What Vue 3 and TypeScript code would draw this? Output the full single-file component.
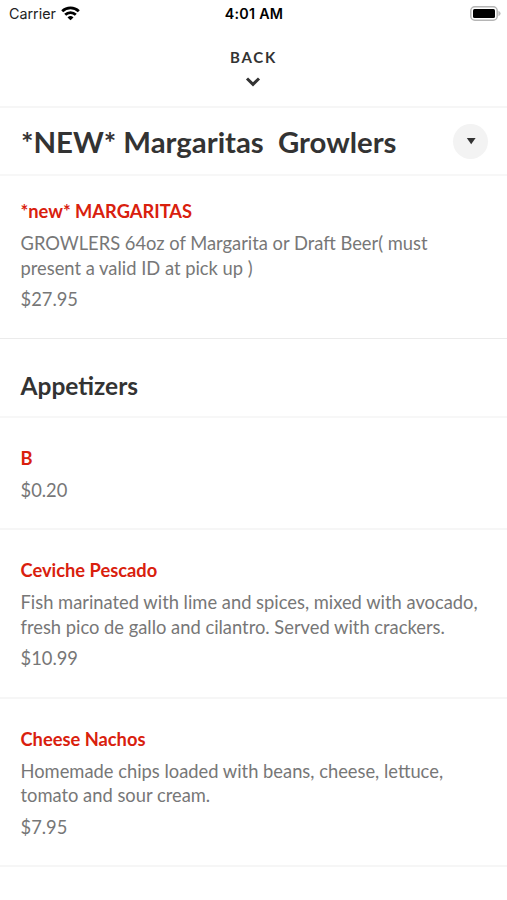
<script setup lang="ts">
interface Item { name: string; lines: string[]; price: string }
const special: Item = {
  name: '*new* MARGARITAS',
  lines: ['GROWLERS 64oz of Margarita or Draft Beer( must', 'present a valid ID at pick up )'],
  price: '$27.95',
}
const appetizers: Item[] = [
  { name: 'B', lines: [], price: '$0.20' },
  { name: 'Ceviche Pescado', lines: ['Fish marinated with lime and spices, mixed with avocado,', 'fresh pico de gallo and cilantro. Served with crackers.'], price: '$10.99' },
  { name: 'Cheese Nachos', lines: ['Homemade chips loaded with beans, cheese, lettuce,', 'tomato and sour cream.'], price: '$7.95' },
]
</script>

<template>
  <main class="screen">
    <header class="status">
      <div class="carrier">
        <span>Carrier</span>
        <svg width="19" height="15" viewBox="0 0 19 15" fill="none" stroke="#000" stroke-width="2.8">
          <path d="M1.2 5.2a12 12 0 0 1 16.6 0M4.2 8.8a7.6 7.6 0 0 1 10.6 0" />
          <path d="M9.5 14.2 6.5 11.4a4.3 4.3 0 0 1 6 0z" fill="#000" stroke="none" />
        </svg>
      </div>
      <time>4:01 AM</time>
      <svg class="battery" width="31" height="15" viewBox="0 0 31 15">
        <rect x=".8" y=".8" width="26.4" height="13.4" rx="4" fill="none" stroke="#b5b5b5" stroke-width="1.5" />
        <rect x="3" y="3" width="22" height="9" rx="1.5" />
        <path d="M28.4 4.7q2.2 1 2.2 2.8t-2.2 2.8z" fill="#bbb" />
      </svg>
    </header>
    <button class="back">
      <span>BACK</span>
      <svg width="16" height="10" viewBox="0 0 16 10"><path d="m2 1.5 6 5.8 6-5.8" fill="none" stroke="#333" stroke-width="3" /></svg>
    </button>
    <section class="title">
      <h1>*NEW* Margaritas&nbsp; Growlers</h1>
      <button class="toggle" aria-label="Categories">
        <svg width="10" height="8" viewBox="0 0 10 8"><path d="M.8.9h8.8L5.2 7.2z" fill="#333" /></svg>
      </button>
    </section>
    <article class="item first">
      <h3>{{ special.name }}</h3>
      <p class="desc"><span v-for="line in special.lines" :key="line">{{ line }}</span></p>
      <p class="price">{{ special.price }}</p>
    </article>
    <h2>Appetizers</h2>
    <article v-for="item in appetizers" :key="item.name" class="item">
      <h3>{{ item.name }}</h3>
      <p v-if="item.lines.length" class="desc"><span v-for="line in item.lines" :key="line">{{ line }}</span></p>
      <p class="price">{{ item.price }}</p>
    </article>
  </main>
</template>

<style>
body { margin: 0; background: #fff; }
</style>
<style scoped>
* { box-sizing: border-box; }
.screen { width: 507px; height: 900px; overflow: hidden; background: #fff; color: #333; font-family: Lato, sans-serif; }
h1, h2, h3, p { margin: 0; }
button { border: 0; padding: 0; background: none; font: inherit; color: inherit; }
svg { display: block; }
.status { display: grid; grid-template-columns: 1fr auto 1fr; height: 28px; padding: 0 6px 0 9px; align-items: center; font: 14.3px/28px Inter, sans-serif; color: #000; }
.carrier { display: flex; align-items: center; gap: 5px; }
.carrier svg { margin-top: -2px; }
.carrier span { color: #222; }
.status time { font-weight: 600; letter-spacing: .25px; margin-left: -2px; }
.battery { justify-self: end; margin-top: -2px; }
.back { display: flex; flex-direction: column; align-items: center; width: 100%; height: 80px; padding-top: 19px; border-bottom: 2px solid #f6f6f6; font-size: 15px; line-height: 20px; font-weight: 700; letter-spacing: 1.7px; }
.back svg { margin: 10px 1px 0 0; }
.title { display: flex; align-items: center; justify-content: space-between; height: 68px; padding: 0 19px 0 21px; border-bottom: 2px solid #f7f7f7; }
h1 { font-size: 29.35px; line-height: 36px; font-weight: 700; padding-top: 2px; letter-spacing: -.01px; font-variant-ligatures: common-ligatures; }
.toggle { display: grid; place-items: center; width: 35px; height: 35px; border-radius: 50%; background: #f3f3f3; }
h2 { height: 79px; padding: 31px 20.5px 0; border-bottom: 2px solid #f7f7f7; font-size: 24.5px; line-height: 32px; font-weight: 700; }
.item { padding: 28.2px 20.5px 25.9px; border-bottom: 2px solid #f6f6f6; font-size: 18.33px; line-height: 24.5px; color: #777; }
.item.first { padding-top: 23px; padding-bottom: 26px; border-bottom: 1px solid #ebebeb; }
h3 { font-size: 18.3px; line-height: 25px; font-weight: 700; color: #d9200d; }
.desc { margin-top: 7px; }
.desc span { display: block; white-space: nowrap; }
.price { margin-top: 7px; line-height: 24.5px; }
</style>
